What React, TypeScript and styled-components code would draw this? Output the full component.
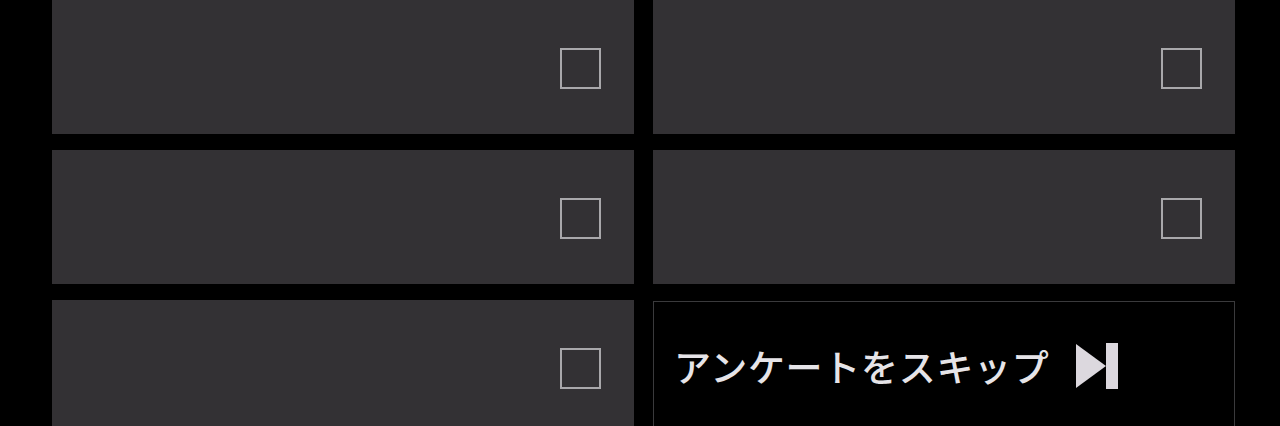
import React from "react";
import styled, { createGlobalStyle } from "styled-components";

const GlobalStyle = createGlobalStyle`
  html, body {
    margin: 0;
    padding: 0;
    background: #000;
    overflow: hidden;
  }
  body {
    font-family: "Noto Sans CJK JP", "Noto Sans", sans-serif;
  }
`;

const Page = styled.div`
  width: 1280px;
  height: 426px;
  overflow: hidden;
  background: #000;
  box-sizing: border-box;
  padding: 0 45px 0 52px;
`;

const OptionGrid = styled.div`
  display: grid;
  grid-template-columns: 582px 582px;
  grid-auto-rows: 134px;
  column-gap: 19px;
  row-gap: 16px;
`;

const OptionCard = styled.button`
  display: flex;
  align-items: center;
  justify-content: flex-end;
  padding: 3px 33px 0 0;
  border: none;
  background: #333134;
  cursor: pointer;
`;

const CheckBox = styled.span`
  display: block;
  width: 41px;
  height: 41px;
  box-sizing: border-box;
  border: 2px solid #a9a8ab;
`;

const SkipButton = styled.button`
  display: flex;
  align-items: flex-start;
  gap: 26px;
  margin-top: 1px;
  padding: 38px 0 0 20px;
  border: 1.5px solid #3a3a3c;
  background: #000;
  color: #e6e4e8;
  font-family: "Noto Sans CJK JP", "Noto Sans", sans-serif;
  font-size: 37px;
  font-weight: 500;
  letter-spacing: 0.7px;
  line-height: 52px;
  cursor: pointer;
  text-align: left;
`;

const SkipIcon = styled.svg`
  width: 43px;
  height: 46px;
  margin-top: 3px;
  flex: none;
`;

export default function App() {
  return (
    <>
      <GlobalStyle />
      <Page>
        <OptionGrid>
          {[0, 1, 2, 3, 4].map((i) => (
            <OptionCard key={i}>
              <CheckBox />
            </OptionCard>
          ))}
          <SkipButton>
            <span>アンケートをスキップ</span>
            <SkipIcon viewBox="0 0 43 46">
              <polygon points="0,1 30,23 0,45" fill="#dcd8de" />
              <rect x="30" y="0" width="12" height="46" fill="#dcd8de" />
            </SkipIcon>
          </SkipButton>
        </OptionGrid>
      </Page>
    </>
  );
}
